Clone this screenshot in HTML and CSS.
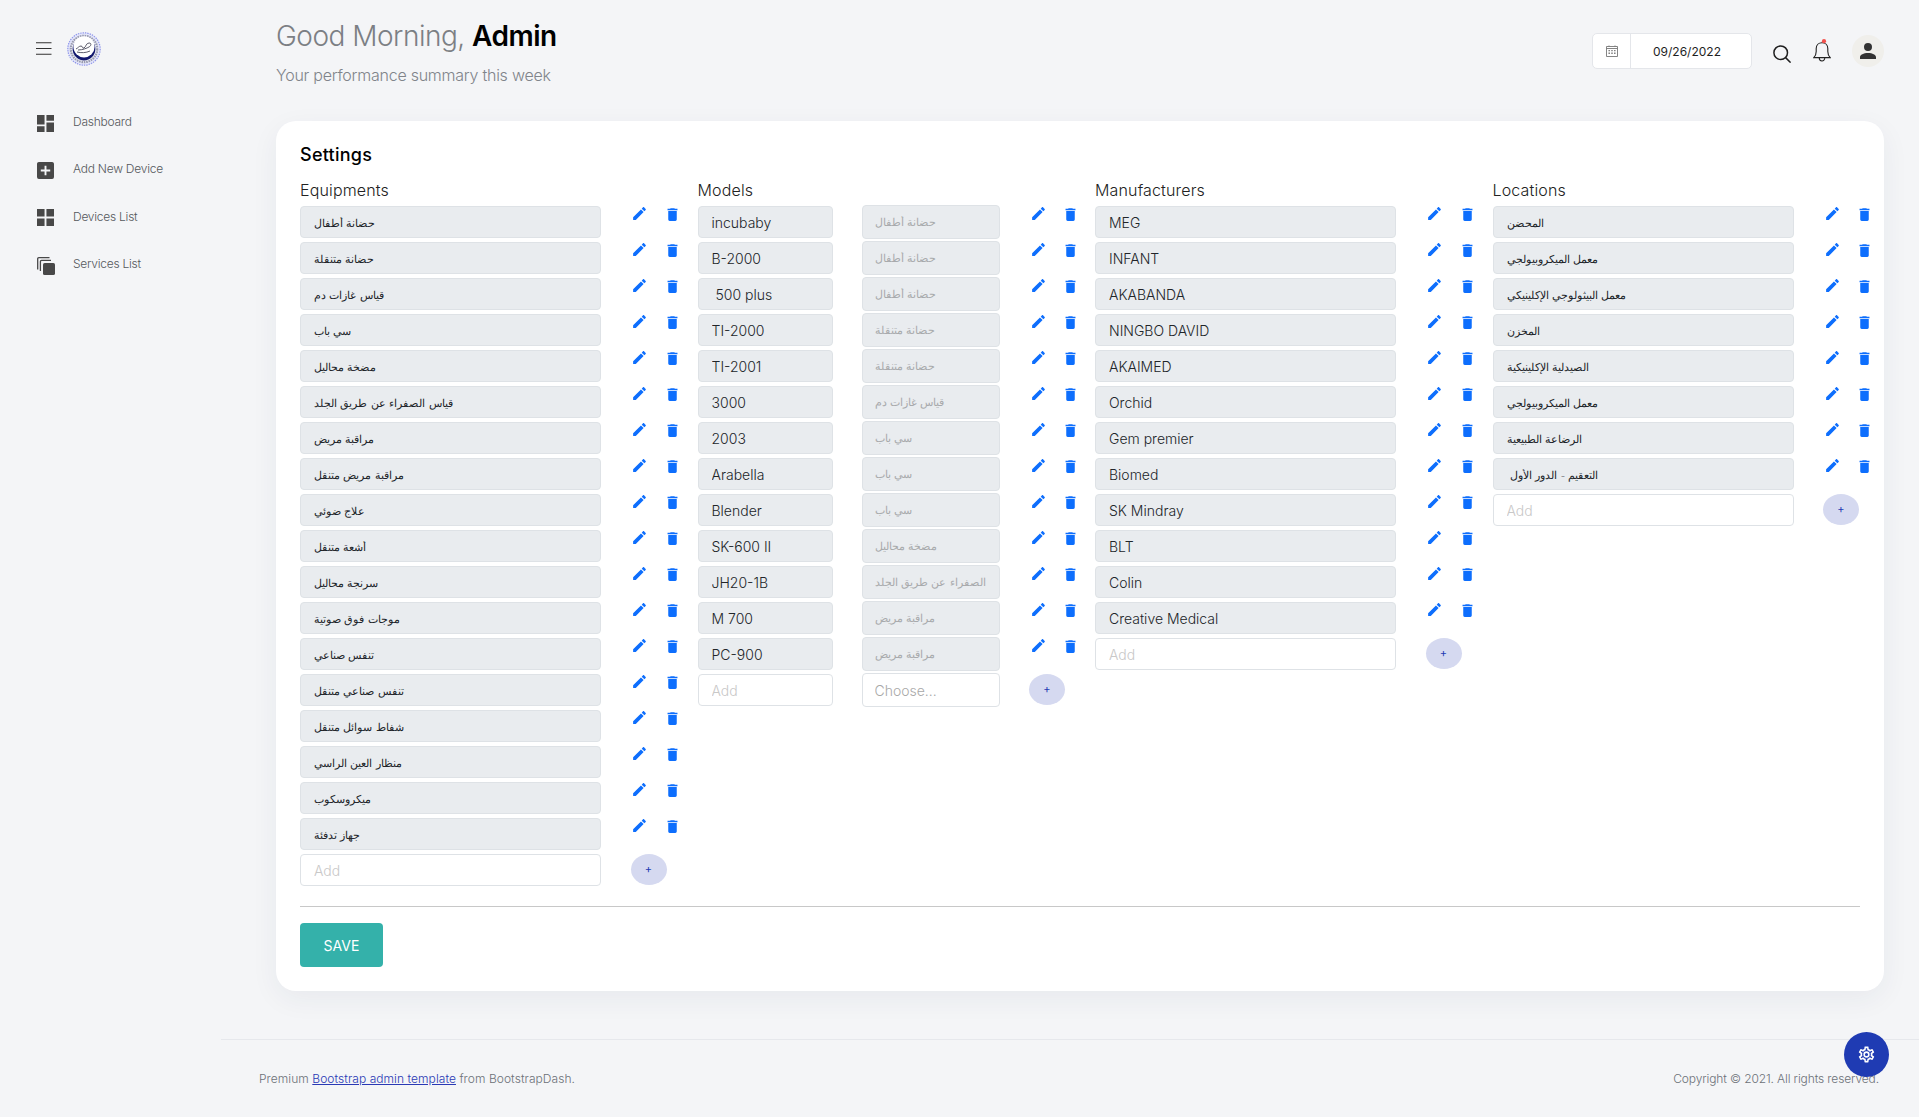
FILE: index.html
```html
<!DOCTYPE html>
<html lang="en">
<head>
<meta charset="utf-8">
<title>Settings</title>
<link rel="stylesheet" href="styles.css">
</head>
<body>
<svg class="icon-defs" xmlns="http://www.w3.org/2000/svg">
  <symbol id="i-pencil" viewBox="0 0 24 24"><path d="M20.71,7.04C21.1,6.65 21.1,6 20.71,5.63L18.37,3.29C18,2.9 17.35,2.9 16.96,3.29L15.12,5.12L18.87,8.87M3,17.25V21H6.75L17.81,9.93L14.06,6.18L3,17.25Z"/></symbol>
  <symbol id="i-trash" viewBox="0 0 24 24"><path d="M19,4H15.5L14.5,3H9.5L8.5,4H5V6H19M6,19A2,2 0 0,0 8,21H16A2,2 0 0,0 18,19V7H6V19Z"/></symbol>
</svg>
<div class="layout">
  <aside class="sidebar">
    <div class="brand">
      <svg class="brand__menu" viewBox="0 0 16 13"><path d="M0 .75h15.5M0 6.5h15.5M0 12.25h15.5" fill="none" stroke="#333" stroke-width="1.2"/></svg>
      <svg class="brand__logo" viewBox="0 0 34 34">
        <circle cx="17" cy="17" r="16.2" fill="#e4e6fb" stroke="#8f96ea" stroke-width="1.2" stroke-dasharray="1.4 1"/>
        <circle cx="17" cy="17" r="13.2" fill="#f2f3f8" stroke="#9a9cb0" stroke-width="2.2" stroke-dasharray="1.6 .8"/>
        <circle cx="17" cy="17" r="11.4" fill="#12186e"/>
        <circle cx="17" cy="14.8" r="10.6" fill="#fff"/>
        <path d="M9 17c2-1 3-3 5-3s1 3 3 2 2-5 5-5 2 3 0 4-6 3-11 3M10 20c4 1 9 1 13-1" fill="none" stroke="#4a4a5a" stroke-width=".9"/>
      </svg>
    </div>
    <nav class="nav">
      <a class="nav__item"><svg class="nav__icon" viewBox="3 3 18 18"><path d="M13,3V9H21V3M13,21H21V11H13M3,21H11V15H3M3,13H11V3H3V13Z"/></svg>Dashboard</a>
      <a class="nav__item"><svg class="nav__icon" viewBox="3 3 18 18"><path d="M17,13H13V17H11V13H7V11H11V7H13V11H17M19,3H5C3.89,3 3,3.89 3,5V19A2,2 0 0,0 5,21H19A2,2 0 0,0 21,19V5C21,3.89 20.1,3 19,3Z"/></svg>Add New Device</a>
      <a class="nav__item"><svg class="nav__icon" viewBox="3 3 18 18"><path d="M3,11H11V3H3M3,21H11V13H3M13,21H21V13H13M13,3V11H21V3"/></svg>Devices List</a>
      <a class="nav__item"><svg class="nav__icon nav__icon--stack" viewBox="0 0 18 18"><path d="M.7 12.5V1.8A1.1 1.1 0 0 1 1.8.7H12.5M3.4 14V4.5A1.1 1.1 0 0 1 4.5 3.4H14" fill="none" stroke="#484848" stroke-width="1.3"/><rect x="6" y="6" width="12" height="12" rx="1.6"/></svg>Services List</a>
    </nav>
  </aside>
  <div class="main">
    <header class="topbar">
      <div class="welcome">
        <h1 class="welcome__title">Good Morning, <span class="welcome__name">Admin</span></h1>
        <p class="welcome__sub">Your performance summary this week</p>
      </div>
      <div class="tools">
        <div class="datebox">
          <span class="datebox__addon"><svg class="datebox__icon" viewBox="0 0 12 12"><path d="M.5 1.5h11v10H.5zM.5 3.5h11M3 .5v1M9 .5v1" fill="none" stroke="#777" stroke-width=".9"/><path d="M2.5 5h1.4v1.3H2.5zM5.3 5h1.4v1.3H5.3zM8.1 5h1.4v1.3H8.1zM2.5 7.6h1.4v1.3H2.5zM5.3 7.6h1.4v1.3H5.3zM8.1 7.6h1.4v1.3H8.1z" fill="#777"/></svg></span>
          <span class="datebox__value">09/26/2022</span>
        </div>
        <svg class="tools__search" viewBox="0 0 18 18"><circle cx="7.7" cy="7.7" r="6.8" fill="none" stroke="#1f1f1f" stroke-width="1.5"/><path d="M12.6 12.6l5 5" stroke="#1f1f1f" stroke-width="1.5"/></svg>
        <svg class="tools__bell" viewBox="0 0 18 23"><path d="M.8 18.6c1.5-1.6 2.4-3 2.4-6.2V9.5c0-3.4 2.4-5.7 5.8-5.7s5.8 2.3 5.8 5.7v2.9c0 3.2.9 4.6 2.4 6.2zM6.2 18.8c0 4.2 5.6 4.2 5.6 0" fill="none" stroke="#222" stroke-width="1.1"/><circle cx="11" cy="2.2" r="2.1" fill="#f2504b"/></svg>
        <span class="tools__avatar"><svg class="tools__person" viewBox="4 4 16 16"><path d="M12,4A4,4 0 0,1 16,8A4,4 0 0,1 12,12A4,4 0 0,1 8,8A4,4 0 0,1 12,4M12,14C16.42,14 20,15.79 20,18V20H4V18C4,15.79 7.58,14 12,14Z"/></svg></span>
      </div>
    </header>

    <section class="card">
      <h2 class="card__title">Settings</h2>
      <div class="columns">

        <div class="group group--arabic">
          <h3 class="group__title">Equipments</h3>
          <div class="row"><input class="field field--full" disabled value="حضانة أطفال"><div class="actions"><svg class="actions__edit"><use href="#i-pencil"/></svg><svg class="actions__del"><use href="#i-trash"/></svg></div></div>
          <div class="row"><input class="field field--full" disabled value="حضانة متنقلة"><div class="actions"><svg class="actions__edit"><use href="#i-pencil"/></svg><svg class="actions__del"><use href="#i-trash"/></svg></div></div>
          <div class="row"><input class="field field--full" disabled value="قياس غازات دم"><div class="actions"><svg class="actions__edit"><use href="#i-pencil"/></svg><svg class="actions__del"><use href="#i-trash"/></svg></div></div>
          <div class="row"><input class="field field--full" disabled value="سي باب"><div class="actions"><svg class="actions__edit"><use href="#i-pencil"/></svg><svg class="actions__del"><use href="#i-trash"/></svg></div></div>
          <div class="row"><input class="field field--full" disabled value="مضخة محاليل"><div class="actions"><svg class="actions__edit"><use href="#i-pencil"/></svg><svg class="actions__del"><use href="#i-trash"/></svg></div></div>
          <div class="row"><input class="field field--full" disabled value="قياس الصفراء عن طريق الجلد"><div class="actions"><svg class="actions__edit"><use href="#i-pencil"/></svg><svg class="actions__del"><use href="#i-trash"/></svg></div></div>
          <div class="row"><input class="field field--full" disabled value="مراقبة مريض"><div class="actions"><svg class="actions__edit"><use href="#i-pencil"/></svg><svg class="actions__del"><use href="#i-trash"/></svg></div></div>
          <div class="row"><input class="field field--full" disabled value="مراقبة مريض متنقل"><div class="actions"><svg class="actions__edit"><use href="#i-pencil"/></svg><svg class="actions__del"><use href="#i-trash"/></svg></div></div>
          <div class="row"><input class="field field--full" disabled value="علاج ضوئي"><div class="actions"><svg class="actions__edit"><use href="#i-pencil"/></svg><svg class="actions__del"><use href="#i-trash"/></svg></div></div>
          <div class="row"><input class="field field--full" disabled value="أشعة متنقل"><div class="actions"><svg class="actions__edit"><use href="#i-pencil"/></svg><svg class="actions__del"><use href="#i-trash"/></svg></div></div>
          <div class="row"><input class="field field--full" disabled value="سرنجة محاليل"><div class="actions"><svg class="actions__edit"><use href="#i-pencil"/></svg><svg class="actions__del"><use href="#i-trash"/></svg></div></div>
          <div class="row"><input class="field field--full" disabled value="موجات فوق صوتية"><div class="actions"><svg class="actions__edit"><use href="#i-pencil"/></svg><svg class="actions__del"><use href="#i-trash"/></svg></div></div>
          <div class="row"><input class="field field--full" disabled value="تنفس صناعي"><div class="actions"><svg class="actions__edit"><use href="#i-pencil"/></svg><svg class="actions__del"><use href="#i-trash"/></svg></div></div>
          <div class="row"><input class="field field--full" disabled value="تنفس صناعي متنقل"><div class="actions"><svg class="actions__edit"><use href="#i-pencil"/></svg><svg class="actions__del"><use href="#i-trash"/></svg></div></div>
          <div class="row"><input class="field field--full" disabled value="شفاط سوائل متنقل"><div class="actions"><svg class="actions__edit"><use href="#i-pencil"/></svg><svg class="actions__del"><use href="#i-trash"/></svg></div></div>
          <div class="row"><input class="field field--full" disabled value="منظار العين الراسي"><div class="actions"><svg class="actions__edit"><use href="#i-pencil"/></svg><svg class="actions__del"><use href="#i-trash"/></svg></div></div>
          <div class="row"><input class="field field--full" disabled value="ميكروسكوب"><div class="actions"><svg class="actions__edit"><use href="#i-pencil"/></svg><svg class="actions__del"><use href="#i-trash"/></svg></div></div>
          <div class="row"><input class="field field--full" disabled value="جهاز تدفئة"><div class="actions"><svg class="actions__edit"><use href="#i-pencil"/></svg><svg class="actions__del"><use href="#i-trash"/></svg></div></div>
          <div class="row"><input class="field field--full field--add" placeholder="Add"><button class="add-btn">+</button></div>
        </div>

        <div class="group">
          <h3 class="group__title">Models</h3>
          <div class="row"><input class="field field--model" disabled value="incubaby"><select class="picker" disabled><option>حضانة أطفال</option></select><div class="actions"><svg class="actions__edit"><use href="#i-pencil"/></svg><svg class="actions__del"><use href="#i-trash"/></svg></div></div>
          <div class="row"><input class="field field--model" disabled value="B-2000"><select class="picker" disabled><option>حضانة أطفال</option></select><div class="actions"><svg class="actions__edit"><use href="#i-pencil"/></svg><svg class="actions__del"><use href="#i-trash"/></svg></div></div>
          <div class="row"><input class="field field--model" disabled value=" 500 plus"><select class="picker" disabled><option>حضانة أطفال</option></select><div class="actions"><svg class="actions__edit"><use href="#i-pencil"/></svg><svg class="actions__del"><use href="#i-trash"/></svg></div></div>
          <div class="row"><input class="field field--model" disabled value="TI-2000"><select class="picker" disabled><option>حضانة متنقلة</option></select><div class="actions"><svg class="actions__edit"><use href="#i-pencil"/></svg><svg class="actions__del"><use href="#i-trash"/></svg></div></div>
          <div class="row"><input class="field field--model" disabled value="TI-2001"><select class="picker" disabled><option>حضانة متنقلة</option></select><div class="actions"><svg class="actions__edit"><use href="#i-pencil"/></svg><svg class="actions__del"><use href="#i-trash"/></svg></div></div>
          <div class="row"><input class="field field--model" disabled value="3000"><select class="picker" disabled><option>قياس غازات دم</option></select><div class="actions"><svg class="actions__edit"><use href="#i-pencil"/></svg><svg class="actions__del"><use href="#i-trash"/></svg></div></div>
          <div class="row"><input class="field field--model" disabled value="2003"><select class="picker" disabled><option>سي باب</option></select><div class="actions"><svg class="actions__edit"><use href="#i-pencil"/></svg><svg class="actions__del"><use href="#i-trash"/></svg></div></div>
          <div class="row"><input class="field field--model" disabled value="Arabella"><select class="picker" disabled><option>سي باب</option></select><div class="actions"><svg class="actions__edit"><use href="#i-pencil"/></svg><svg class="actions__del"><use href="#i-trash"/></svg></div></div>
          <div class="row"><input class="field field--model" disabled value="Blender"><select class="picker" disabled><option>سي باب</option></select><div class="actions"><svg class="actions__edit"><use href="#i-pencil"/></svg><svg class="actions__del"><use href="#i-trash"/></svg></div></div>
          <div class="row"><input class="field field--model" disabled value="SK-600 II"><select class="picker" disabled><option>مضخة محاليل</option></select><div class="actions"><svg class="actions__edit"><use href="#i-pencil"/></svg><svg class="actions__del"><use href="#i-trash"/></svg></div></div>
          <div class="row"><input class="field field--model" disabled value="JH20-1B"><select class="picker" disabled><option>قياس الصفراء عن طريق الجلد</option></select><div class="actions"><svg class="actions__edit"><use href="#i-pencil"/></svg><svg class="actions__del"><use href="#i-trash"/></svg></div></div>
          <div class="row"><input class="field field--model" disabled value="M 700"><select class="picker" disabled><option>مراقبة مريض</option></select><div class="actions"><svg class="actions__edit"><use href="#i-pencil"/></svg><svg class="actions__del"><use href="#i-trash"/></svg></div></div>
          <div class="row"><input class="field field--model" disabled value="PC-900"><select class="picker" disabled><option>مراقبة مريض</option></select><div class="actions"><svg class="actions__edit"><use href="#i-pencil"/></svg><svg class="actions__del"><use href="#i-trash"/></svg></div></div>
          <div class="row"><input class="field field--model field--add" placeholder="Add"><select class="picker picker--open"><option>Choose...</option></select><button class="add-btn">+</button></div>
        </div>

        <div class="group">
          <h3 class="group__title">Manufacturers</h3>
          <div class="row"><input class="field field--full" disabled value="MEG"><div class="actions"><svg class="actions__edit"><use href="#i-pencil"/></svg><svg class="actions__del"><use href="#i-trash"/></svg></div></div>
          <div class="row"><input class="field field--full" disabled value="INFANT"><div class="actions"><svg class="actions__edit"><use href="#i-pencil"/></svg><svg class="actions__del"><use href="#i-trash"/></svg></div></div>
          <div class="row"><input class="field field--full" disabled value="AKABANDA"><div class="actions"><svg class="actions__edit"><use href="#i-pencil"/></svg><svg class="actions__del"><use href="#i-trash"/></svg></div></div>
          <div class="row"><input class="field field--full" disabled value="NINGBO DAVID"><div class="actions"><svg class="actions__edit"><use href="#i-pencil"/></svg><svg class="actions__del"><use href="#i-trash"/></svg></div></div>
          <div class="row"><input class="field field--full" disabled value="AKAIMED"><div class="actions"><svg class="actions__edit"><use href="#i-pencil"/></svg><svg class="actions__del"><use href="#i-trash"/></svg></div></div>
          <div class="row"><input class="field field--full" disabled value="Orchid"><div class="actions"><svg class="actions__edit"><use href="#i-pencil"/></svg><svg class="actions__del"><use href="#i-trash"/></svg></div></div>
          <div class="row"><input class="field field--full" disabled value="Gem premier"><div class="actions"><svg class="actions__edit"><use href="#i-pencil"/></svg><svg class="actions__del"><use href="#i-trash"/></svg></div></div>
          <div class="row"><input class="field field--full" disabled value="Biomed"><div class="actions"><svg class="actions__edit"><use href="#i-pencil"/></svg><svg class="actions__del"><use href="#i-trash"/></svg></div></div>
          <div class="row"><input class="field field--full" disabled value="SK Mindray"><div class="actions"><svg class="actions__edit"><use href="#i-pencil"/></svg><svg class="actions__del"><use href="#i-trash"/></svg></div></div>
          <div class="row"><input class="field field--full" disabled value="BLT"><div class="actions"><svg class="actions__edit"><use href="#i-pencil"/></svg><svg class="actions__del"><use href="#i-trash"/></svg></div></div>
          <div class="row"><input class="field field--full" disabled value="Colin"><div class="actions"><svg class="actions__edit"><use href="#i-pencil"/></svg><svg class="actions__del"><use href="#i-trash"/></svg></div></div>
          <div class="row"><input class="field field--full" disabled value="Creative Medical"><div class="actions"><svg class="actions__edit"><use href="#i-pencil"/></svg><svg class="actions__del"><use href="#i-trash"/></svg></div></div>
          <div class="row"><input class="field field--full field--add" placeholder="Add"><button class="add-btn">+</button></div>
        </div>

        <div class="group group--arabic">
          <h3 class="group__title">Locations</h3>
          <div class="row"><input class="field field--full" disabled value="المحضن"><div class="actions"><svg class="actions__edit"><use href="#i-pencil"/></svg><svg class="actions__del"><use href="#i-trash"/></svg></div></div>
          <div class="row"><input class="field field--full" disabled value="معمل الميكروبيولجي"><div class="actions"><svg class="actions__edit"><use href="#i-pencil"/></svg><svg class="actions__del"><use href="#i-trash"/></svg></div></div>
          <div class="row"><input class="field field--full" disabled value="معمل البيثولوجي الإكلينيكي"><div class="actions"><svg class="actions__edit"><use href="#i-pencil"/></svg><svg class="actions__del"><use href="#i-trash"/></svg></div></div>
          <div class="row"><input class="field field--full" disabled value="المخزن"><div class="actions"><svg class="actions__edit"><use href="#i-pencil"/></svg><svg class="actions__del"><use href="#i-trash"/></svg></div></div>
          <div class="row"><input class="field field--full" disabled value="الصيدلية الإكلينيكية"><div class="actions"><svg class="actions__edit"><use href="#i-pencil"/></svg><svg class="actions__del"><use href="#i-trash"/></svg></div></div>
          <div class="row"><input class="field field--full" disabled value="معمل الميكروبيولجي"><div class="actions"><svg class="actions__edit"><use href="#i-pencil"/></svg><svg class="actions__del"><use href="#i-trash"/></svg></div></div>
          <div class="row"><input class="field field--full" disabled value="الرضاعة الطبيعية"><div class="actions"><svg class="actions__edit"><use href="#i-pencil"/></svg><svg class="actions__del"><use href="#i-trash"/></svg></div></div>
          <div class="row"><input class="field field--full" disabled value=" التعقيم - الدور الأول"><div class="actions"><svg class="actions__edit"><use href="#i-pencil"/></svg><svg class="actions__del"><use href="#i-trash"/></svg></div></div>
          <div class="row"><input class="field field--full field--add" placeholder="Add"><button class="add-btn">+</button></div>
        </div>

      </div>
      <hr class="card__rule">
      <button class="save-btn">SAVE</button>
    </section>

    <footer class="footer">
      <span class="footer__left">Premium <a class="footer__link">Bootstrap admin template</a> from BootstrapDash.</span>
      <span class="footer__right">Copyright © 2021. All rights reserved.</span>
    </footer>
  </div>
</div>
<button class="fab"><svg class="fab__icon" viewBox="0 0 24 24"><path d="M12,8A4,4 0 0,1 16,12A4,4 0 0,1 12,16A4,4 0 0,1 8,12A4,4 0 0,1 12,8M12,10A2,2 0 0,0 10,12A2,2 0 0,0 12,14A2,2 0 0,0 14,12A2,2 0 0,0 12,10M10,22C9.75,22 9.54,21.82 9.5,21.58L9.13,18.93C8.5,18.68 7.96,18.34 7.44,17.94L4.95,18.95C4.73,19.03 4.46,18.95 4.34,18.73L2.34,15.27C2.21,15.05 2.27,14.78 2.46,14.63L4.57,12.97L4.5,12L4.57,11L2.46,9.37C2.27,9.22 2.21,8.95 2.34,8.73L4.34,5.27C4.46,5.05 4.73,4.96 4.95,5.05L7.44,6.05C7.96,5.66 8.5,5.32 9.13,5.07L9.5,2.42C9.54,2.18 9.75,2 10,2H14C14.25,2 14.46,2.18 14.5,2.42L14.87,5.07C15.5,5.32 16.04,5.66 16.56,6.05L19.05,5.05C19.27,4.96 19.54,5.05 19.66,5.27L21.66,8.73C21.79,8.95 21.73,9.22 21.54,9.37L19.43,11L19.5,12L19.43,13L21.54,14.63C21.73,14.78 21.79,15.05 21.66,15.27L19.66,18.73C19.54,18.95 19.27,19.04 19.05,18.95L16.56,17.95C16.04,18.34 15.5,18.68 14.87,18.93L14.5,21.58C14.46,21.82 14.25,22 14,22H10M11.25,4L10.88,6.61C9.68,6.86 8.62,7.5 7.85,8.39L5.44,7.35L4.69,8.65L6.8,10.2C6.4,11.37 6.4,12.64 6.8,13.8L4.68,15.36L5.43,16.66L7.86,15.62C8.63,16.5 9.68,17.14 10.87,17.38L11.24,20H12.76L13.13,17.39C14.32,17.14 15.37,16.5 16.14,15.62L18.57,16.66L19.32,15.36L17.2,13.81C17.6,12.64 17.6,11.37 17.2,10.2L19.31,8.65L18.56,7.35L16.15,8.39C15.38,7.5 14.32,6.86 13.12,6.62L12.75,4H11.25Z"/></svg></button>
</body>
</html>
```
FILE: styles.css
```css
* { box-sizing: border-box; }
html, body { margin: 0; padding: 0; }
body {
  background: #f4f5f7;
  color: #1f1f1f;
  font-family: Inter, "Noto Sans", "DejaVu Sans", sans-serif;
  min-height: 1117px;
}
.icon-defs { display: none; }
.layout { display: flex; min-height: 1117px; }

/* sidebar */
.sidebar { width: 221px; flex: none; padding: 32px 0 0 36px; }
.brand { display: flex; align-items: flex-start; height: 34px; }
.brand__menu { width: 16px; height: 13px; margin-top: 10px; }
.brand__logo { width: 34px; height: 34px; margin-left: 15px; }
.nav { margin-top: 32px; margin-left: 1px; display: flex; flex-direction: column; }
.nav__item {
  height: 47.33px;
  display: flex;
  align-items: center;
  color: #55585c;
  font-size: 12px;
  font-weight: 300;
  letter-spacing: -.25px;
}
.nav__icon { width: 17px; height: 17px; fill: #484848; margin: 3px 19px 0 0; flex: none; }
.nav__icon--stack { width: 18px; height: 18px; margin: 4px 18px 0 0; }

/* main column */
.main { flex: 1; min-width: 0; display: flex; flex-direction: column; }
.topbar { display: flex; justify-content: space-between; padding: 16px 35px 0 55px; height: 121px; }
.welcome__title { margin: 0; font-size: 28px; line-height: 40px; font-weight: 300; color: #7c7f84; letter-spacing: -.5px; }
.welcome__name { font-weight: 600; color: #000; }
.welcome__sub { margin: 9px 0 0; font-size: 16px; line-height: 20px; font-weight: 300; color: #80848a; letter-spacing: -.25px; }
.tools { display: flex; align-items: flex-start; padding-top: 17px; }
.datebox {
  display: flex;
  width: 160px;
  height: 36px;
  background: #fff;
  border: 1px solid #e4e6ea;
  border-radius: 5px;
  font-size: 12px;
  color: #1f1f1f;
}
.datebox__addon { width: 38px; flex: none; border-right: 1px solid #e4e6ea; display: flex; align-items: center; justify-content: center; }
.datebox__icon { width: 12px; height: 12px; }
.datebox__value { flex: 1; text-align: center; line-height: 36px; padding-right: 8px; }
.tools__search { width: 18px; height: 18px; margin: 12px 0 0 21px; }
.tools__bell { width: 18px; height: 23px; margin: 6px 0 0 22px; }
.tools__avatar { width: 32px; height: 32px; border-radius: 50%; background: #f0efeb; margin: 2px 0 0 21px; display: flex; align-items: center; justify-content: center; }
.tools__person { width: 16px; height: 16px; fill: #333; }

/* card */
.card {
  margin: 0 35px 0 55px;
  padding: 24px;
  background: #fff;
  border-radius: 20px;
  box-shadow: 0 8px 28px rgba(40, 50, 80, .06);
}
.card__title { margin: 0 0 14px; font-size: 18px; line-height: 20px; font-weight: 500; color: #000; letter-spacing: .25px; }
.columns { display: grid; grid-template-columns: repeat(4, 397.5px); }
.group__title { margin: 0 0 5px; font-size: 16px; line-height: 22px; font-weight: 300; color: #222; letter-spacing: .15px; }
.row { display: flex; align-items: flex-start; height: 36px; }
.row:last-child { height: 32px; }
.field {
  height: 32px;
  padding: 1px 13px 0;
  border: 1px solid #dee2e6;
  border-radius: 4px;
  background: #e9ecef;
  color: #212529;
  -webkit-text-fill-color: #212529;
  opacity: 1;
  font-family: inherit;
  font-size: 14px;
  font-weight: 300;
  flex: none;
  outline: none;
}
.group--arabic .field:disabled { font-family: "DejaVu Sans", sans-serif; font-size: 11px; padding-top: 3px; }
.field--full { width: 301px; }
.field--model { width: 135.5px; margin-right: 28.5px; }
.field--add { background: #fff; }
.field--add::placeholder { color: #c9c8c8; -webkit-text-fill-color: #c9c8c8; opacity: 1; }
.picker {
  appearance: none;
  -webkit-appearance: none;
  width: 138px;
  height: 34px;
  margin-top: -1px;
  padding: 0 12px;
  border: 1px solid #dee2e6;
  border-radius: 4px;
  background: #e9ecef;
  color: #a8aaac;
  opacity: 1;
  font-family: inherit;
  font-size: 14px;
  font-weight: 300;
  flex: none;
}
.picker:disabled { font-family: "DejaVu Sans", sans-serif; font-size: 11px; }
.picker--open { background: #fff; color: #a8a8a8; }
.actions { display: flex; align-items: flex-start; margin-left: 30px; color: #0d6efd; }
.actions svg { width: 17px; height: 17px; fill: #0d6efd; flex: none; }
.actions__edit { margin-top: -1px; }
.actions__del { margin-left: 15.5px; }
.add-btn {
  width: 36px;
  height: 31px;
  margin-left: 29.5px;
  padding: 0;
  border: 0;
  border-radius: 50%;
  background: #d5d9f0;
  color: #1f3bb3;
  font-family: inherit;
  font-size: 11px;
  line-height: 31px;
}
.card__rule { height: 1px; margin: 20px 0 16px; border: 0; background: #c8c8c8; }
.save-btn {
  display: block;
  width: 83px;
  height: 44px;
  padding: 0;
  border: 0;
  border-radius: 4px;
  background: #34b1aa;
  color: #fff;
  font-family: inherit;
  font-size: 14px;
  font-weight: 400;
}

/* footer */
.footer {
  margin-top: auto;
  height: 78px;
  border-top: 1px solid #e6e8ec;
  padding: 0 40px 0 38px;
  display: flex;
  align-items: center;
  justify-content: space-between;
  font-size: 12px;
  color: #6c7178;
  font-weight: 300;
}
.footer__left { letter-spacing: .06px; }
.footer__right { letter-spacing: -.12px; }
.footer__link { color: #2a39b5; text-decoration: underline; }

/* floating settings button */
.fab {
  position: fixed;
  right: 30px;
  bottom: 40px;
  width: 45px;
  height: 45px;
  padding: 0;
  border: 0;
  border-radius: 50%;
  background: #1f3bb3;
  display: flex;
  align-items: center;
  justify-content: center;
}
.fab__icon { width: 19px; height: 19px; fill: #fff; }
```
